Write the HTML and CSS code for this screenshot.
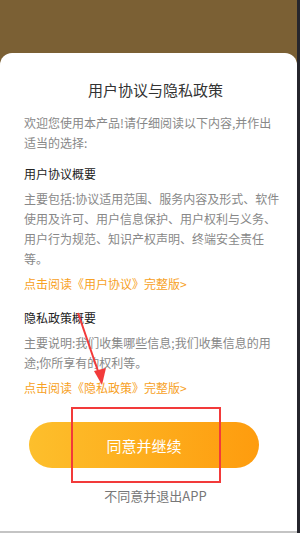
FILE: index.html
```html
<!DOCTYPE html>
<html lang="zh">
<head>
    <meta charset="UTF-8">
    <meta name="viewport" content="width=device-width, initial-scale=1.0">
    <title>用户协议与隐私政策</title>
    <link rel="stylesheet" href="styles.css">
</head>
<body>
    <div class="screen">
        <div class="backdrop"></div>
        <div class="dialog">
            <h1 class="title">用户协议与隐私政策</h1>
            <p class="intro">欢迎您使用本产品!请仔细阅读以下内容,并作出适当的选择:</p>

            <h2 class="section-title">用户协议概要</h2>
            <p class="desc wide">主要包括:协议适用范围、服务内容及形式、软件<br>使用及许可、用户信息保护、用户权利与义务、<br>用户行为规范、知识产权声明、终端安全责任<br>等。</p>
            <a class="read-link" href="#">点击阅读《用户协议》完整版&gt;</a>

            <h2 class="section-title second">隐私政策概要</h2>
            <p class="desc">主要说明:我们收集哪些信息;我们收集信息的用途;你所享有的权利等。</p>
            <a class="read-link" href="#">点击阅读《隐私政策》完整版&gt;</a>

            <button class="agree-btn">同意并继续</button>
            <div class="refuse">不同意并退出APP</div>
        </div>

        <!-- annotation marks drawn over the screenshot -->
        <div class="mark-box"></div>
        <svg class="mark-arrow" width="300" height="533" viewBox="0 0 300 533">
            <line x1="78" y1="313" x2="99" y2="374" stroke="#f23a3a" stroke-width="2"/>
            <polygon points="102,385 94,371 106,368" fill="#f23a3a"/>
        </svg>
    </div>
</body>
</html>
```

FILE: styles.css
```css
* {
    margin: 0;
    padding: 0;
    box-sizing: border-box;
}

body {
    font-family: "Noto Sans CJK SC", "Noto Sans", sans-serif;
    background-color: #26262d;
    width: 300px;
    height: 533px;
    overflow: hidden;
}

.screen {
    position: relative;
    width: 297px;
    height: 533px;
    display: flex;
    flex-direction: column;
    background-color: #7b6034;
    border-bottom: 2px solid #c4c4c4;
}

.backdrop {
    height: 53px;
    flex-shrink: 0;
}

.dialog {
    flex: 1;
    background-color: #fff;
    border-radius: 12px 12px 0 0;
    padding: 27px 17px 0 24px;
    display: flex;
    flex-direction: column;
}

.title {
    font-size: 15px;
    font-weight: normal;
    line-height: 20px;
    color: #333;
    text-align: center;
    margin-right: -7px;
}

.intro {
    margin-top: 13px;
    width: 255px;
    font-size: 12px;
    line-height: 20px;
    color: #888;
}

.desc {
    margin-top: 5px;
    width: 255px;
    font-size: 12px;
    line-height: 20px;
    color: #888;
}

.desc.wide {
    width: 268px;
}

.section-title {
    margin-top: 11px;
    font-size: 12px;
    font-weight: normal;
    line-height: 20px;
    color: #222;
}

.section-title.second {
    margin-top: 14px;
}

.read-link {
    margin-top: 5px;
    font-size: 12px;
    line-height: 20px;
    color: #f7a124;
    text-decoration: none;
}

.agree-btn {
    align-self: center;
    margin: 24px 0 0 -16px;
    width: 230px;
    height: 46px;
    border: none;
    border-radius: 23px;
    background: linear-gradient(90deg, #fdbf2c, #fe9c0e);
    color: #fff;
    font-family: inherit;
    font-size: 15px;
}

.refuse {
    margin-top: 18px;
    margin-right: -7px;
    font-size: 13px;
    line-height: 20px;
    color: #777;
    text-align: center;
}

.mark-box {
    position: absolute;
    left: 71px;
    top: 407px;
    width: 150px;
    height: 76px;
    border: 2px solid #f23a3a;
}

.mark-arrow {
    position: absolute;
    left: 0;
    top: 0;
    pointer-events: none;
}
```
